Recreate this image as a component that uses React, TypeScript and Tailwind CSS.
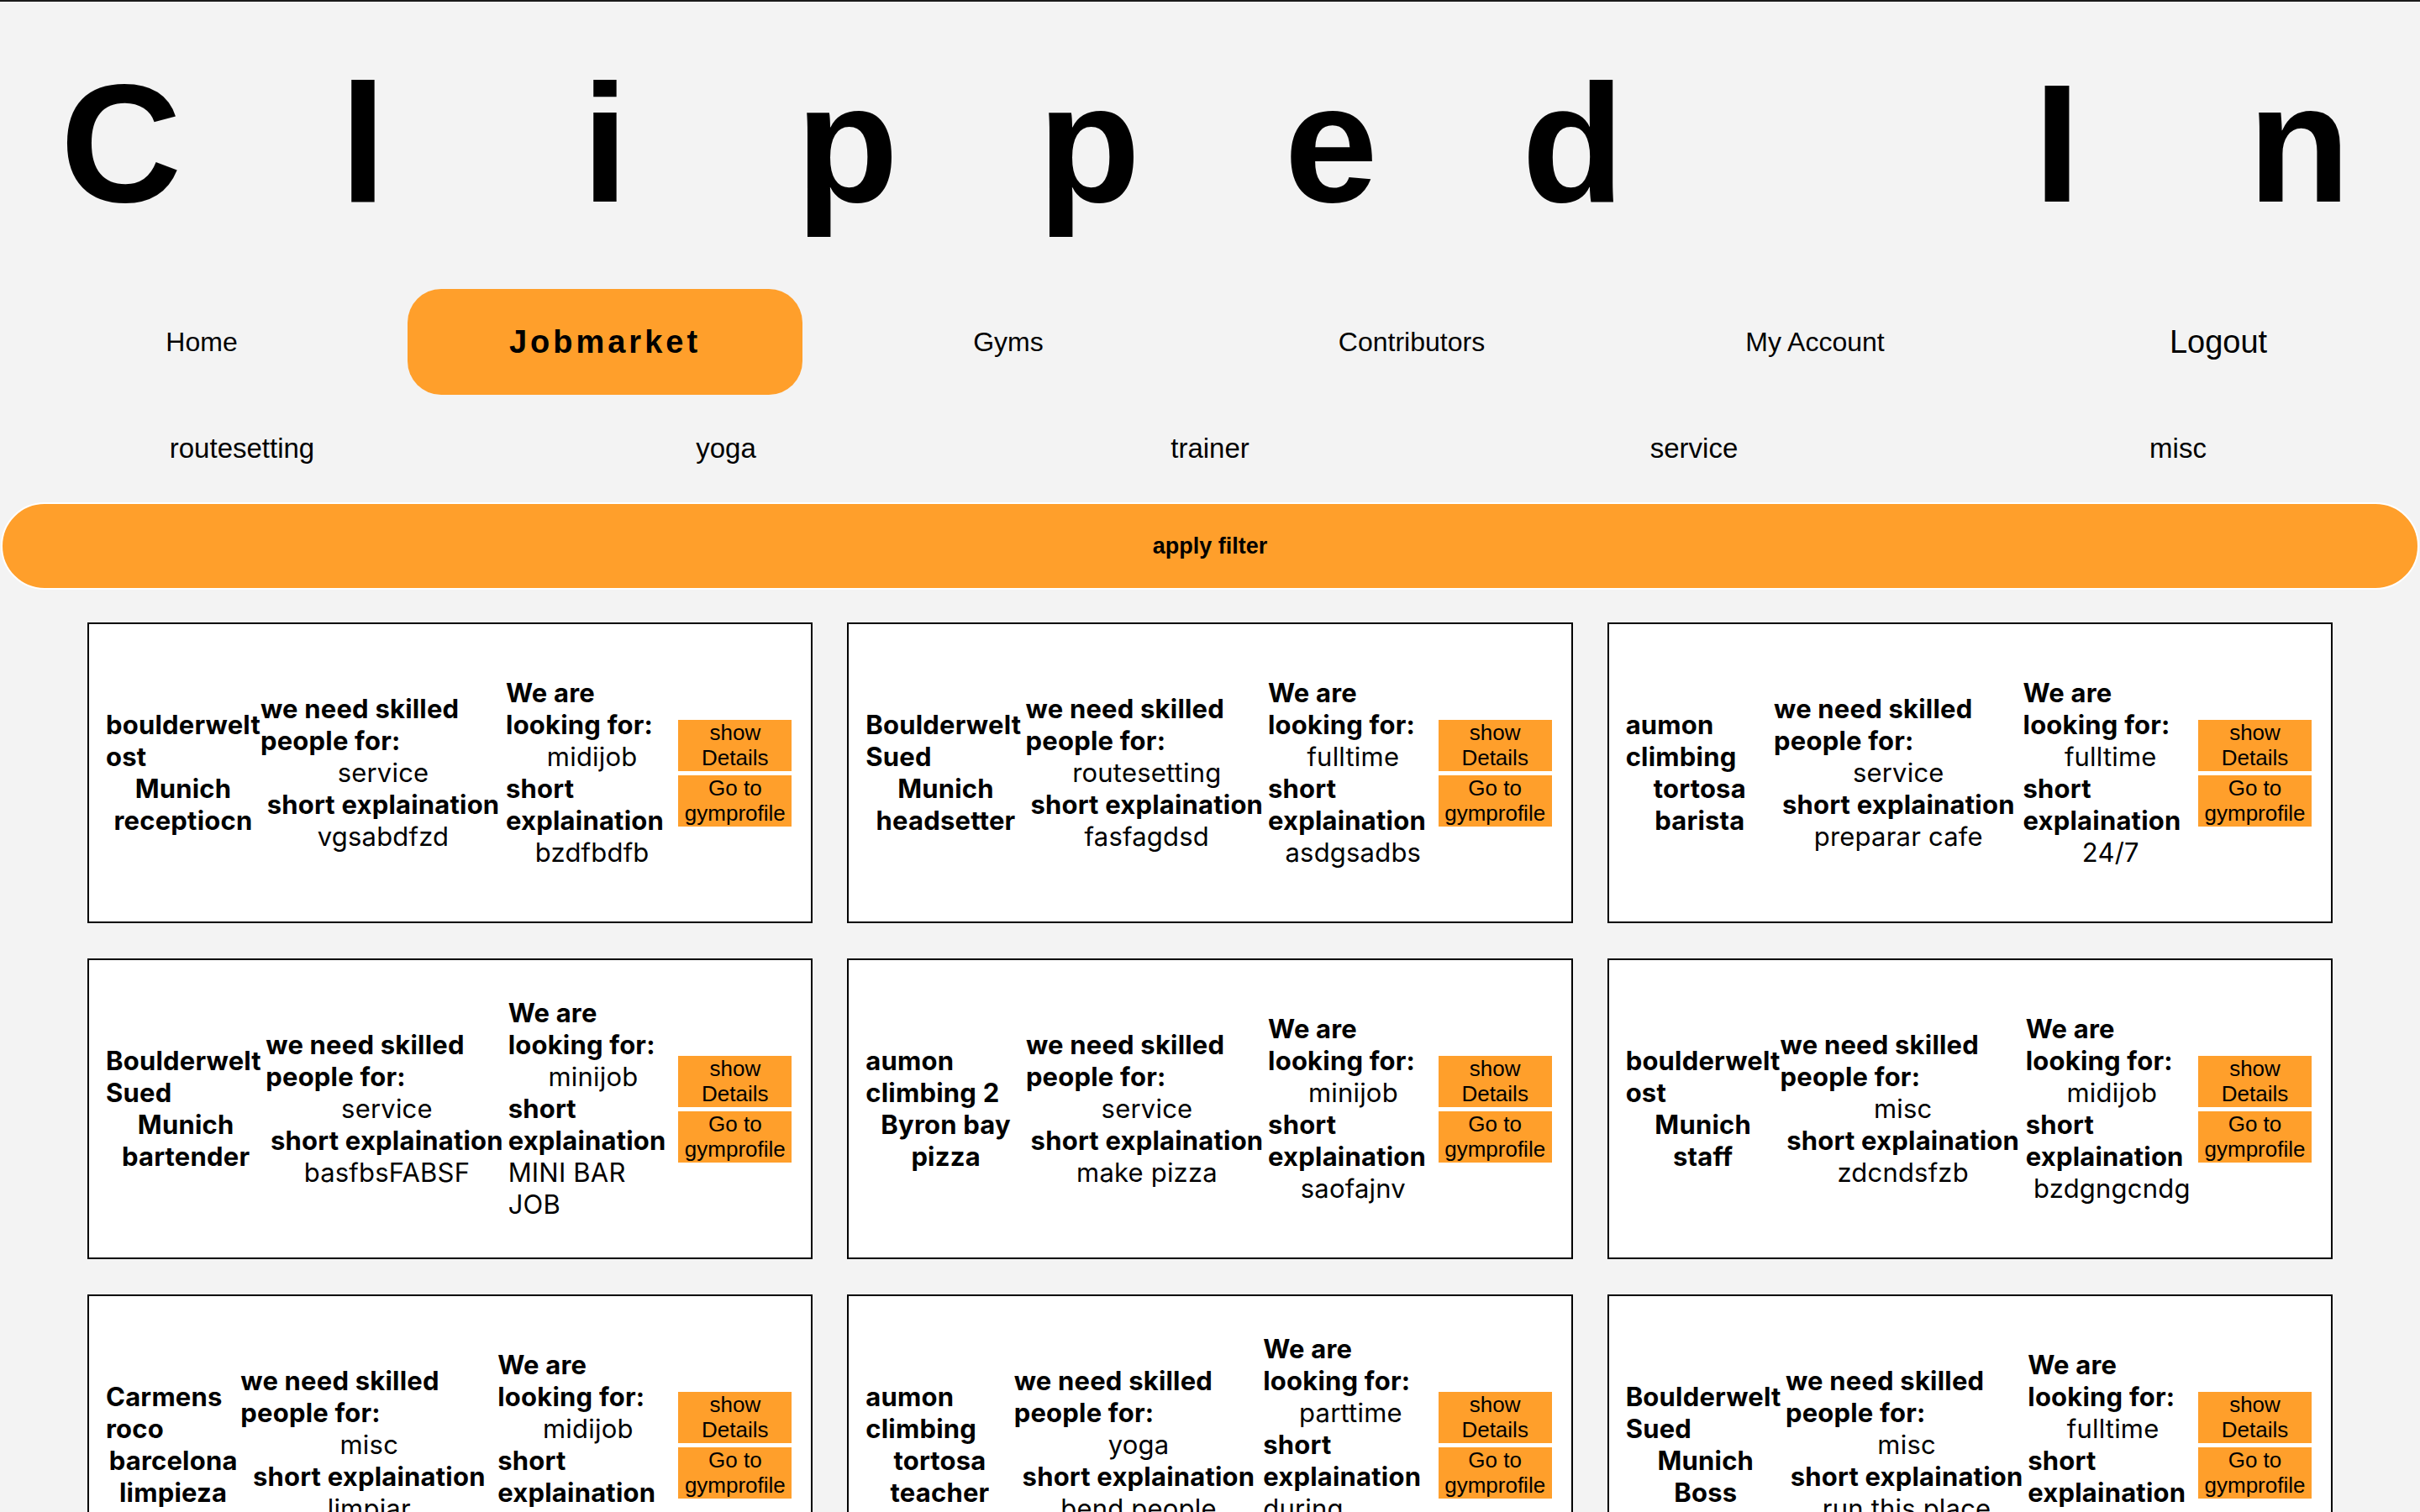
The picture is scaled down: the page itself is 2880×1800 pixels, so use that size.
import React from 'react';

interface Job {
    gym: string;
    city: string;
    position: string;
    category: string;
    categoryNote: string;
    type: string;
    typeNote: string;
}

const jobs: Job[] = [
    { gym: 'boulderwelt ost', city: 'Munich', position: 'receptiocn', category: 'service', categoryNote: 'vgsabdfzd', type: 'midijob', typeNote: 'bzdfbdfb' },
    { gym: 'Boulderwelt Sued', city: 'Munich', position: 'headsetter', category: 'routesetting', categoryNote: 'fasfagdsd', type: 'fulltime', typeNote: 'asdgsadbs' },
    { gym: 'aumon climbing', city: 'tortosa', position: 'barista', category: 'service', categoryNote: 'preparar cafe', type: 'fulltime', typeNote: '24/7' },
    { gym: 'Boulderwelt Sued', city: 'Munich', position: 'bartender', category: 'service', categoryNote: 'basfbsFABSF', type: 'minijob', typeNote: 'MINI BAR JOB' },
    { gym: 'aumon climbing 2', city: 'Byron bay', position: 'pizza', category: 'service', categoryNote: 'make pizza', type: 'minijob', typeNote: 'saofajnv' },
    { gym: 'boulderwelt ost', city: 'Munich', position: 'staff', category: 'misc', categoryNote: 'zdcndsfzb', type: 'midijob', typeNote: 'bzdgngcndg' },
    { gym: 'Carmens roco', city: 'barcelona', position: 'limpieza', category: 'misc', categoryNote: 'limpiar', type: 'midijob', typeNote: 'sdfgsdg' },
    { gym: 'aumon climbing', city: 'tortosa', position: 'teacher', category: 'yoga', categoryNote: 'bend people', type: 'parttime', typeNote: 'during weekends' },
    { gym: 'Boulderwelt Sued', city: 'Munich', position: 'Boss', category: 'misc', categoryNote: 'run this place', type: 'fulltime', typeNote: 'always' },
];

const titleLetters = ['C', 'l', 'i', 'p', 'p', 'e', 'd', ' ', 'I', 'n'];
const navItems = ['Home', 'Jobmarket', 'Gyms', 'Contributors', 'My Account', 'Logout'];
const filters = ['routesetting', 'yoga', 'trainer', 'service', 'misc'];

function JobCard({ job }: { job: Job }) {
    return (
        <div className="h-[358px] border-2 border-black bg-white pl-5 pr-[23px] flex items-center font-['Inter',sans-serif] text-[31px] leading-[38px] tracking-[0.2px] text-black">
            {/* gym */}
            <div className="flex flex-col items-center">
                <p className="font-bold text-left">{job.gym}</p>
                <p className="font-bold text-left">{job.city}</p>
                <p className="font-bold text-left">{job.position}</p>
            </div>
            {/* category */}
            <div className="flex flex-col items-center">
                <p className="font-bold text-left">we need skilled people for:</p>
                <p className="text-left">{job.category}</p>
                <p className="font-bold text-left">short explaination</p>
                <p className="text-left">{job.categoryNote}</p>
            </div>
            {/* type */}
            <div className="flex flex-col items-center">
                <p className="font-bold text-left">We are looking for:</p>
                <p className="text-left">{job.type}</p>
                <p className="font-bold text-left">short explaination</p>
                <p className="text-left">{job.typeNote}</p>
            </div>
            {/* buttons */}
            <div className="w-[135px] shrink-0 flex flex-col gap-[5px] font-['Liberation_Sans',Arial,sans-serif] text-[26px] leading-[30px] tracking-normal">
                <button className="h-[61px] w-full bg-[#ff9f2b] text-black">show Details</button>
                <button className="h-[61px] w-full bg-[#ff9f2b] text-black">Go to gymprofile</button>
            </div>
        </div>
    );
}

export default function App() {
    return (
        <div className="min-h-screen bg-[#f3f3f3] border-t-2 border-[#1a1a1a] text-black font-['Liberation_Sans',Arial,sans-serif]">
            {/* Title */}
            <div className="mt-[69px] grid grid-cols-10 text-[200px] leading-[200px] font-bold">
                {titleLetters.map((ch, i) => (
                    <span key={i} className="text-center">{ch === ' ' ? '\u00a0' : ch}</span>
                ))}
            </div>

            {/* Nav */}
            <nav className="mt-[73px] grid grid-cols-6 h-[126px]">
                {navItems.map(item => (
                    <div key={item} className="flex items-center justify-center">
                        {item === 'Jobmarket' ? (
                            <div className="w-[470px] h-[126px] rounded-[40px] bg-[#ff9f2b] flex items-center justify-center text-[38px] font-bold tracking-[4px]">
                                {item}
                            </div>
                        ) : (
                            <span className={item === 'Logout' ? 'text-[38px]' : 'text-[32px]'}>{item}</span>
                        )}
                    </div>
                ))}
            </nav>

            {/* Filters */}
            <div className="grid grid-cols-5 h-[128px]">
                {filters.map(f => (
                    <div key={f} className="flex items-center justify-center text-[33px]">{f}</div>
                ))}
            </div>

            <button className="block mx-[1px] w-[calc(100%-2px)] h-[104px] rounded-full border-2 border-white bg-[#ff9f2b] text-[27px] font-bold">
                apply filter
            </button>

            {/* Job cards */}
            <div className="mt-[39px] px-[104px] grid grid-cols-3 gap-x-[41px] gap-y-[42px] pb-10">
                {jobs.map((job, i) => (
                    <JobCard key={i} job={job} />
                ))}
            </div>
        </div>
    );
}
